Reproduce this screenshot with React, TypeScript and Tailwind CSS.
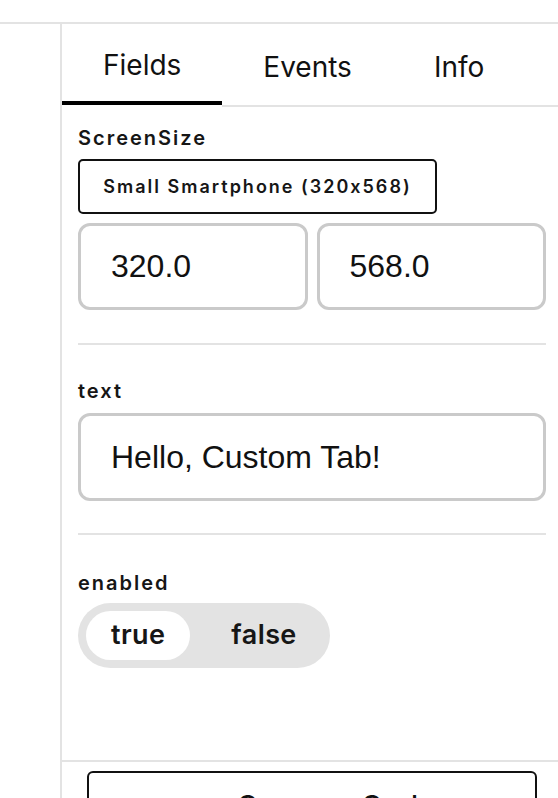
import React, { useState } from "react";

const sans = "font-['Inter','Noto_Sans',sans-serif]";
const arial = "font-['Liberation_Sans','Arial',sans-serif]";

const tabs = ["Fields", "Events", "Info"];

function Label({ children, className = "" }: { children: React.ReactNode; className?: string }) {
  return (
    <div className={`${sans} text-[20px] leading-[24px] font-semibold tracking-[2px] text-[#161616] ${className}`}>
      {children}
    </div>
  );
}

export default function App() {
  const [tab, setTab] = useState("Fields");
  const [enabled, setEnabled] = useState(true);
  const [width, setWidth] = useState("320.0");
  const [height, setHeight] = useState("568.0");
  const [text, setText] = useState("Hello, Custom Tab!");

  return (
    <div className="w-[558px] h-[798px] bg-white flex flex-col overflow-hidden">
      {/* top strip */}
      <div className="h-[24px] shrink-0 border-b-2 border-[#e3e3e3]" />

      <div className="flex flex-1 min-h-0">
        {/* left rail */}
        <div className="w-[62px] shrink-0 border-r-2 border-[#e3e3e3]" />

        {/* property panel */}
        <div className="flex-1 flex flex-col min-w-0">
          {/* Tabs */}
          <div className="flex items-start shrink-0">
            {tabs.map((t) => {
              const active = t === tab;
              return (
                <button
                  key={t}
                  onClick={() => setTab(t)}
                  className={`${sans} h-[83px] flex flex-col justify-start text-[28px] text-[#111] ${
                    active ? "" : "border-b-2 border-[#e3e3e3]"
                  }`}
                >
                  <span
                    className={`h-[81px] px-[41px] pt-[5px] flex items-center ${
                      active ? "border-b-4 border-black" : ""
                    }`}
                  >
                    {t}
                  </span>
                </button>
              );
            })}
            <div className="flex-1 h-[83px] border-b-2 border-[#e3e3e3]" />
          </div>

          {/* Fields */}
          <div className="pl-4 pr-3">
            <Label className="mt-[19px]">ScreenSize</Label>
            <button
              className={`${sans} mt-[9px] w-[359px] h-[55px] border-2 border-[#111] rounded-[5px] text-[18px] font-semibold tracking-[2px] text-[#161616] flex items-center justify-center`}
            >
              Small Smartphone (320x568)
            </button>
            <div className="mt-[9px] grid grid-cols-2 gap-[9px]">
              <input
                value={width}
                onChange={(e) => setWidth(e.target.value)}
                className={`${arial} h-[87px] w-full border-[3px] border-[#cacaca] rounded-[12px] pl-[30px] text-[32px] text-[#111] outline-none`}
              />
              <input
                value={height}
                onChange={(e) => setHeight(e.target.value)}
                className={`${arial} h-[87px] w-full border-[3px] border-[#cacaca] rounded-[12px] pl-[30px] text-[32px] text-[#111] outline-none`}
              />
            </div>

            <div className="mt-[33px] h-[2px] bg-[#e3e3e3]" />

            <Label className="mt-[34px]">text</Label>
            <input
              value={text}
              onChange={(e) => setText(e.target.value)}
              className={`${arial} mt-[10px] block h-[88px] w-full border-[3px] border-[#cacaca] rounded-[12px] pl-[30px] text-[32px] text-[#111] outline-none`}
            />

            <div className="mt-[32px] h-[2px] bg-[#e3e3e3]" />

            <Label className="mt-[36px]">enabled</Label>
            <div className="mt-[8px] inline-flex gap-4 p-2 rounded-full bg-[#e3e3e3]">
              {[true, false].map((v) => (
                <button
                  key={String(v)}
                  onClick={() => setEnabled(v)}
                  className={`${sans} h-[49px] px-[25px] rounded-full text-[27px] font-semibold tracking-[0.4px] text-[#161616] ${
                    enabled === v ? "bg-white" : ""
                  }`}
                >
                  {String(v)}
                </button>
              ))}
            </div>
          </div>

          <div className="flex-1" />

          {/* footer */}
          <div className="shrink-0 h-[38px] border-t-2 border-[#e3e3e3] pt-[9px] pl-[25px] pr-[21px]">
            <button
              className={`${sans} w-full h-[60px] border-2 border-[#111] rounded-[6px] pt-[12px] pl-[148px] flex items-start text-[28px] font-medium tracking-[1px] text-[#111]`}
            >
              Copy as Code
            </button>
          </div>
        </div>
      </div>
    </div>
  );
}
